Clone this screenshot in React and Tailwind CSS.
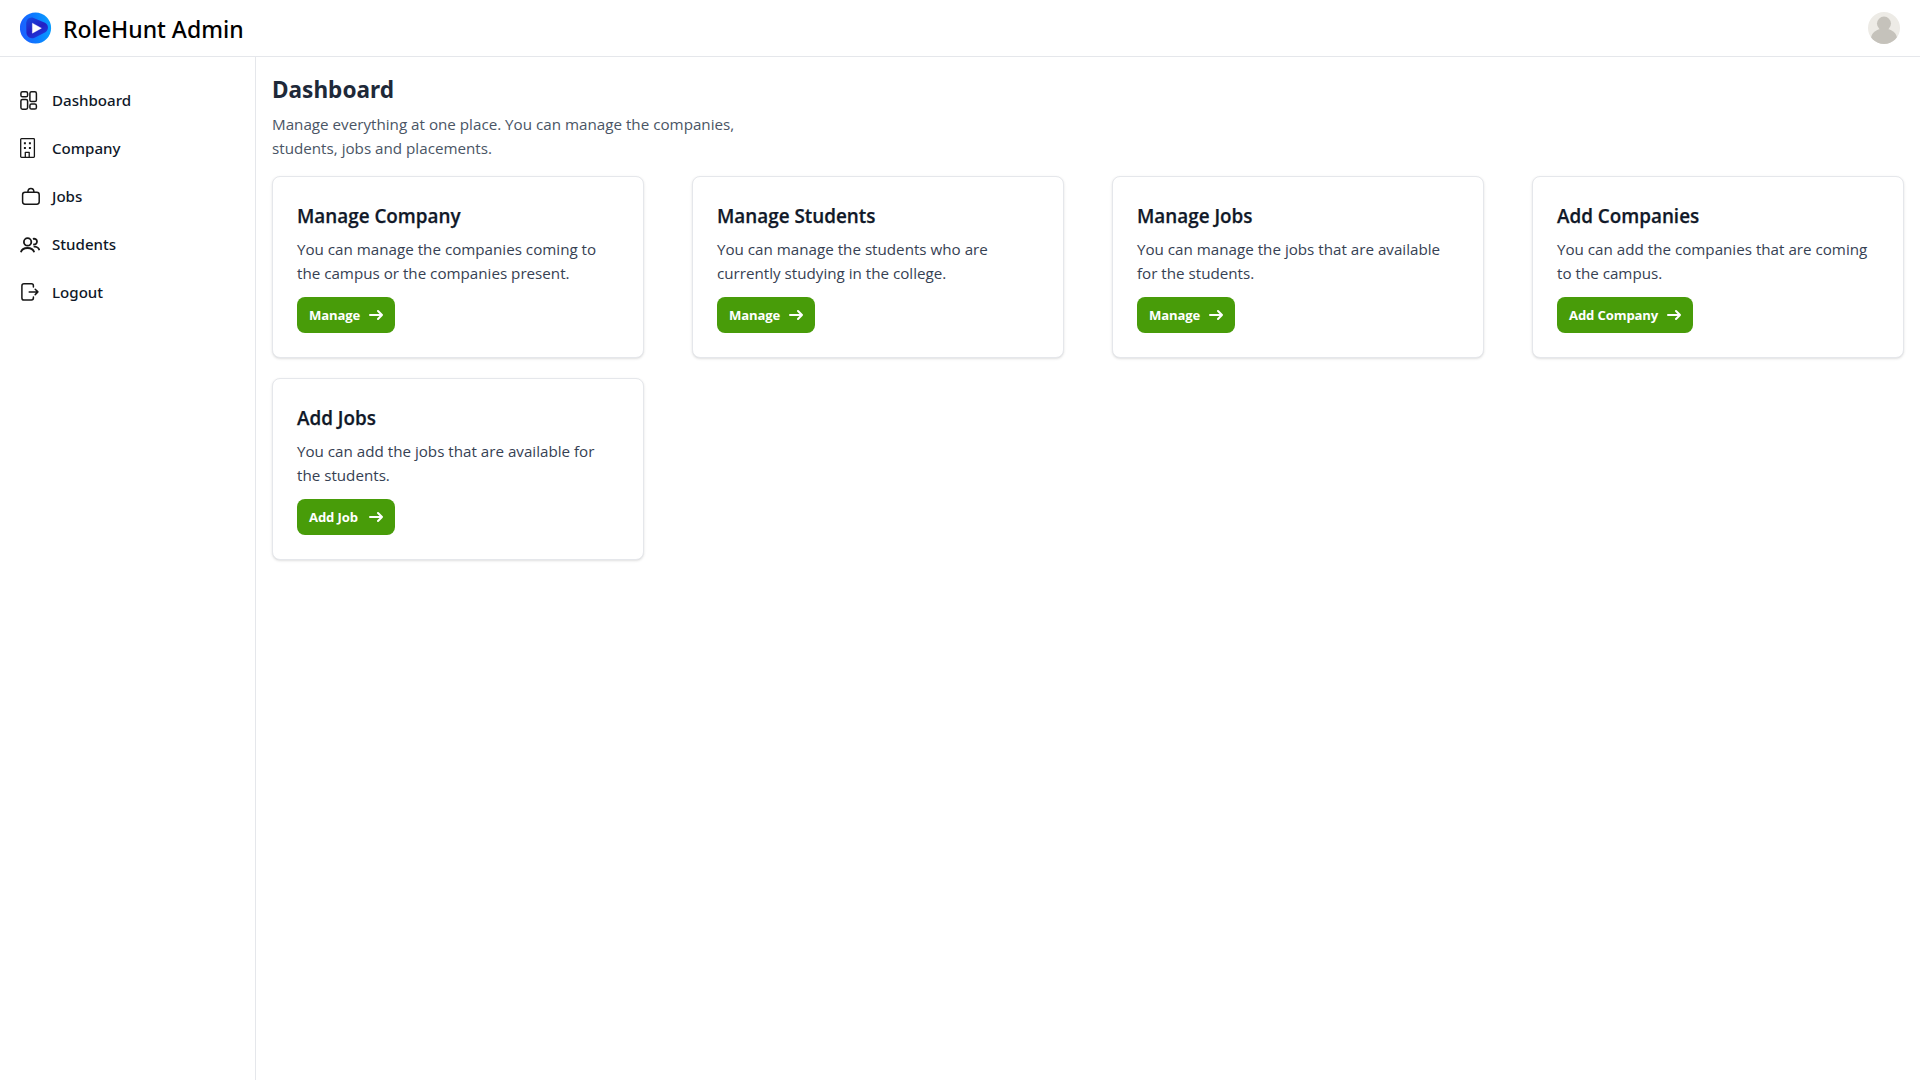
import React from "react";

const stroke = {
  fill: "none",
  stroke: "currentColor",
  strokeLinecap: "round",
  strokeLinejoin: "round",
};

function Logo() {
  return (
    <svg className="h-8 w-8 shrink-0" viewBox="0 0 32 32" aria-hidden="true">
      <defs>
        <linearGradient id="disc" x1="0.1" y1="0.6" x2="0.95" y2="0.5">
          <stop offset="0" stopColor="#1a63ff" />
          <stop offset="0.5" stopColor="#0c7cff" />
          <stop offset="1" stopColor="#0a9bff" />
        </linearGradient>
        <linearGradient id="fold" x1="0.2" y1="0" x2="0.8" y2="1">
          <stop offset="0" stopColor="#1746dc" />
          <stop offset="0.5" stopColor="#2420c4" />
          <stop offset="1" stopColor="#1d3fe0" />
        </linearGradient>
      </defs>
      <circle cx="15.5" cy="16" r="15.6" fill="url(#disc)" />
      <path
        d="M6.2 12.2C6 7.4 9.6 4.4 13.6 5.9L25 10.8C28.8 12.8 29 18 25.4 20.3L14.6 25.7C10.4 27.5 6.6 24.8 6.4 20.6Z"
        fill="url(#fold)"
      />
      <path d="M12.4 11.2L21.4 16.2L12.4 21.2Z" fill="#fff" stroke="#fff" strokeWidth="0.4" strokeLinejoin="round" />
    </svg>
  );
}

function DashboardIcon() {
  return (
    <svg className="h-5 w-5 text-neutral-900" viewBox="0 0 20 20" {...stroke} strokeWidth="1.5">
      <rect x="0.9" y="0.8" width="6.7" height="5" rx="1.6" />
      <rect x="9.9" y="0.8" width="6.5" height="9.7" rx="1.6" />
      <rect x="0.9" y="8.4" width="6.7" height="9.8" rx="1.6" />
      <rect x="9.9" y="13.1" width="6.5" height="5" rx="1.6" />
    </svg>
  );
}

function CompanyIcon() {
  return (
    <svg className="mb-0.5 h-5 w-5 text-neutral-900" viewBox="0 0 20 20" {...stroke} strokeWidth="1.3">
      <rect x="0.7" y="0.7" width="13.7" height="18.6" rx="0.8" />
      <path d="M5.3 19V14.3H9.2V19" />
      <path
        d="M3.9 4.2h2v2h-2zM8.9 4.2h2v2h-2zM3.9 9.1h2v2h-2zM8.9 9.1h2v2h-2z"
        fill="currentColor"
        stroke="none"
      />
    </svg>
  );
}

function JobsIcon() {
  return (
    <svg className="h-5 w-5 text-neutral-900" viewBox="0 0 20 20" {...stroke} strokeWidth="1.5">
      <rect x="2.6" y="5.3" width="16.6" height="11.9" rx="2.4" />
      <path d="M7.9 5.1C7.9 2.8 8.8 1.6 10.9 1.6C13 1.6 13.9 2.8 13.9 5.1" />
    </svg>
  );
}

function StudentsIcon() {
  return (
    <svg className="mb-px h-5 w-5 text-neutral-900" viewBox="0 0 20 20" {...stroke} strokeWidth="1.8" strokeLinecap="butt">
      <circle cx="7.6" cy="6.9" r="3.7" />
      <path d="M0.9 17.2C1.6 14.5 4.3 13 7.5 13C10.7 13 13.4 14.5 14.2 17.2" />
      <path d="M12.9 3.9C15.3 3.3 17 4.7 17 6.6C17 8.6 15.2 9.8 13.2 9.3" />
      <path d="M13.6 11.7C16.3 11.3 18.8 12.8 19.4 15.2" />
    </svg>
  );
}

function LogoutIcon() {
  return (
    <svg className="mb-0.5 h-5 w-5 text-neutral-900" viewBox="0 0 20 20" {...stroke} strokeWidth="1.5">
      <path d="M13.4 4.9V3.7C13.4 2.4 12.8 1.8 11.5 1.8H4C2.6 1.8 1.9 2.5 1.9 3.9V15.9C1.9 17.3 2.6 18 4 18H11.5C12.8 18 13.4 17.4 13.4 16.1V14.9" />
      <path d="M9.2 9.9H17.8M15.2 7.2L17.9 9.9L15.2 12.6" />
    </svg>
  );
}

function Arrow() {
  return (
    <svg className="ml-2 h-3.5 w-3.5" viewBox="0 0 14 10" {...stroke} strokeWidth="2" aria-hidden="true">
      <path d="M1 5h12m0 0L9 1m4 4L9 9" />
    </svg>
  );
}

const nav = [
  ["Dashboard", DashboardIcon],
  ["Company", CompanyIcon],
  ["Jobs", JobsIcon],
  ["Students", StudentsIcon],
  ["Logout", LogoutIcon],
];

const cards = [
  ["Manage Company", ["You can manage the companies coming to", "the campus or the companies present."], "Manage", "w-[98px]"],
  ["Manage Students", ["You can manage the students who are", "currently studying in the college."], "Manage", "w-[98px]"],
  ["Manage Jobs", ["You can manage the jobs that are available", "for the students."], "Manage", "w-[98px]"],
  ["Add Companies", ["You can add the companies that are coming", "to the campus."], "Add Company", "w-[136px]"],
  ["Add Jobs", ["You can add the jobs that are available for", "the students."], "Add Job", "w-[98px]"],
];

function Card({ title, lines, action, width }) {
  return (
    <div className="h-[182px] rounded-lg border border-gray-200 bg-white p-6 shadow-sm">
      <h5 className="mb-[7px] pt-px text-[18.85px] leading-7 font-semibold text-gray-900 [-webkit-text-stroke:0.25px]">{title}</h5>
      <p className="mb-3 text-[15.18px] leading-6 whitespace-nowrap text-gray-700">
        {lines[0]}
        <br />
        {lines[1]}
      </p>
      <button className={`${width} flex h-9 items-center justify-between rounded-lg bg-[#489c09] px-3 text-[13.1px] font-bold tracking-[-0.01em] whitespace-nowrap text-white`}>
        <span className="pt-px">{action}</span>
        <Arrow />
      </button>
    </div>
  );
}

export default function App() {
  return (
    <div className="flex h-screen flex-col overflow-hidden bg-white font-['Open_Sans',sans-serif]">
      <header className="flex h-[57px] shrink-0 items-center justify-between border-b border-gray-200 px-5">
        <div className="flex items-center gap-[11px]">
          <Logo />
          <span className="pt-0.5 font-['Noto_Sans'] text-[23px] leading-8 font-medium text-black">RoleHunt Admin</span>
        </div>
        <svg className="h-8 w-8" viewBox="0 0 32 32" aria-label="Profile">
          <defs>
            <clipPath id="avatar">
              <circle cx="16" cy="16" r="16" />
            </clipPath>
          </defs>
          <g clipPath="url(#avatar)">
            <rect width="32" height="32" fill="#edebe6" />
            <circle cx="16" cy="11.6" r="7" fill="#c5c2bb" />
            <ellipse cx="16" cy="26.8" rx="13" ry="10.4" fill="#c5c2bb" />
          </g>
        </svg>
      </header>
      <div className="flex min-h-0 flex-1">
        <aside className="w-64 shrink-0 border-r border-gray-200 px-5 pt-5">
          <nav className="flex flex-col">
            {nav.map(([label, Icon]) => (
              <a key={label} className="flex h-12 items-center gap-3 text-gray-900">
                <Icon />
                <span className="pb-0.5 font-['Noto_Sans'] text-[15.1px] leading-6 font-medium">{label}</span>
              </a>
            ))}
          </nav>
        </aside>
        <main className="flex-1 p-4">
          <h1 className="pt-px font-['Noto_Sans'] text-[22.6px] leading-8 font-bold text-gray-800">Dashboard</h1>
          <p className="mt-1.5 text-[15.2px] leading-6 text-gray-600">
            Manage everything at one place. You can manage the companies,
            <br />
            students, jobs and placements.
          </p>
          <div className="mt-4 grid grid-cols-4 gap-x-12 gap-y-5">
            {cards.map(([title, lines, action, width]) => (
              <Card key={title} title={title} lines={lines} action={action} width={width} />
            ))}
          </div>
        </main>
      </div>
    </div>
  );
}
